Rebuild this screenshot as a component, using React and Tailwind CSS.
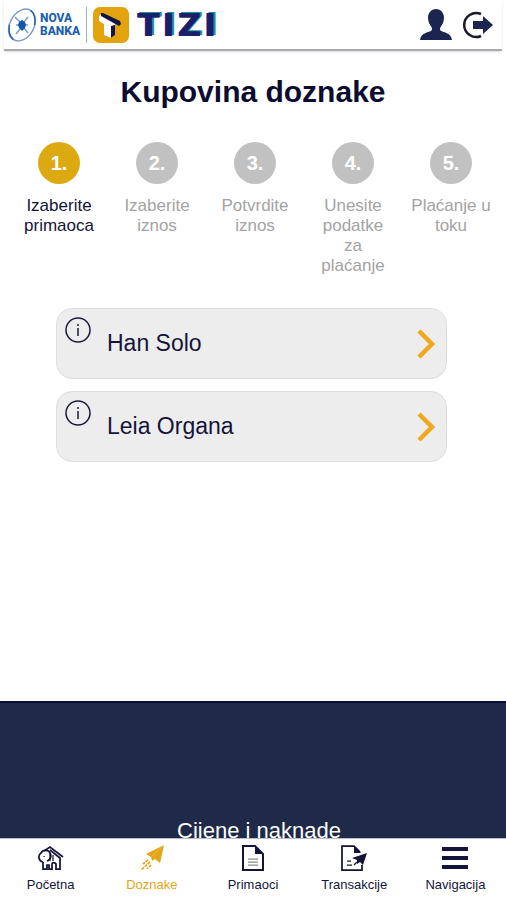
import clsx from 'clsx'

const steps = [
  { title: 'Izaberite primaoca', active: true },
  { title: 'Izaberite iznos' },
  { title: 'Potvrdite iznos' },
  { title: 'Unesite podatke za plaćanje' },
  { title: 'Plaćanje u toku' },
]

const recipients = ['Han Solo', 'Leia Organa']

function NovaBankaMark() {
  return (
    <svg viewBox="0 0 32 36" className="w-8 h-9" fill="none">
      <g transform="rotate(30 16 18)">
        <ellipse cx="16" cy="18" rx="12" ry="17" stroke="#7f9dca" strokeWidth="1.5" />
        <path d="M5 24c2 6 6 10 11 11M27 12c-2-6-6-10-11-11" stroke="#2d63ad" strokeWidth="1.5" />
      </g>
      <path d="M9 10l5 5M22 10l-4 5M10 27l4-5M22 26l-4-5M10 18h3M22 18h-3" stroke="#7f9dca" strokeWidth="1.5" />
      <path d="M16 13l3 2 1 3-1 3-3 3-3-3-1-3 1-3z" fill="#1459a8" />
    </svg>
  )
}

function TiziMark() {
  return (
    <svg viewBox="0 0 36 36" className="size-9">
      <rect width="36" height="36" rx="7" fill="#e3a30c" />
      <path d="M6 9l3-2 18 9v2l-5-1v11l-4 3-7-3V17l-5-3z" fill="#fff" />
      <path d="M8 6h2l17 8 1 3-2 2L8 9z" fill="#14134a" />
      <path d="M18 19l4-1v10l-4 3z" fill="#14134a" />
    </svg>
  )
}

function UserIcon() {
  return (
    <svg viewBox="0 0 32 32" className="size-8" fill="#1b2550">
      <path d="M16 0c5 0 8 4 8 9 0 4-2 7-4 10v2c3 3 11 2 12 10H0c1-8 9-7 12-10v-2c-2-3-4-6-4-10 0-5 3-9 8-9z" />
    </svg>
  )
}

function LogoutIcon() {
  return (
    <svg viewBox="0 0 32 28" className="w-8 h-7">
      <path d="M19 3A12 12 0 1 0 19 25" fill="none" stroke="#1a1a2e" strokeWidth="2.5" />
      <path d="M11 10h10V5l10 9-10 9v-5H11z" fill="#1b2550" />
    </svg>
  )
}

function HomeIcon() {
  return (
    <svg viewBox="0 0 26 26" className="size-[26px]" fill="none" stroke="currentColor" strokeWidth="1.75">
      <path d="M6 6l6-4 13 10" />
      <path d="M12 5l10 8v11h-4v-5c-1-2-4-2-4 0v5h-3v-4H9v4H5v-7" />
      <path d="M5 17c-5-1-5-7-2-9 2-4 8-3 9 0 2 4 0 7-3 8" />
      <path d="M6 11v1M12 8v8M15 10v6" strokeWidth="1.25" />
    </svg>
  )
}

function SendIcon() {
  return (
    <svg viewBox="0 0 26 26" className="size-[26px]" fill="currentColor">
      <path d="M25 0L7 9l5 3z" />
      <path d="M25 0L12 12l1 4 3-2 5 4z" />
      <path d="M9 15l-5 4M11 17l-9 8M12 20l-4 4" stroke="currentColor" strokeWidth="1.75" strokeDasharray="3 1" />
    </svg>
  )
}

function DocumentIcon() {
  return (
    <svg viewBox="0 0 26 26" className="size-[26px]" fill="none" stroke="currentColor">
      <path d="M3 1h12l8 8v16H3z" strokeWidth="2" />
      <path d="M15 1l8 8h-8z" fill="currentColor" stroke="none" />
      <path d="M8 14h10M8 17h10M8 20h10" stroke="#8b8b99" strokeWidth="1.25" />
    </svg>
  )
}

function TransferIcon() {
  return (
    <svg viewBox="0 0 26 26" className="size-[26px]" fill="none" stroke="currentColor">
      <path d="M21 20v5H1V1h12l6 6" strokeWidth="1.75" />
      <path d="M13 1l7 7h-7z" fill="currentColor" stroke="none" />
      <path d="M26 8L11 13l5 2v4l3-2 3 3z" fill="currentColor" stroke="none" />
      <path d="M6 16h4M6 20h5M13 20l3-3" strokeWidth="1.25" />
    </svg>
  )
}

function MenuIcon() {
  return (
    <svg viewBox="0 0 26 26" className="size-[26px]" fill="currentColor">
      <path d="M0 2h26v4H0zM0 11h26v4H0zM0 20h26v4H0z" />
    </svg>
  )
}

const tabs = [
  { label: 'Početna', icon: HomeIcon },
  { label: 'Doznake', icon: SendIcon, active: true },
  { label: 'Primaoci', icon: DocumentIcon },
  { label: 'Transakcije', icon: TransferIcon },
  { label: 'Navigacija', icon: MenuIcon },
]

function Step({ number, title, active }) {
  return (
    <li className="flex flex-col items-center px-2">
      <span
        className={clsx(
          'flex size-[42px] items-center justify-center rounded-full text-xl font-bold text-white',
          active ? 'bg-[#dcaa10]' : 'bg-[#c1c1c1]'
        )}
      >
        {number}.
      </span>
      <span
        className={clsx(
          'mt-3 text-center text-[17px] leading-5',
          active ? 'text-[#14143a]' : 'text-[#a3a3a3]'
        )}
      >
        {title}
      </span>
    </li>
  )
}

function RecipientCard({ name }) {
  return (
    <button className="flex h-[71px] w-full items-center rounded-2xl border border-[#dcdee2] bg-[#ededed] px-2 text-left">
      <svg viewBox="0 0 26 26" className="mt-2 size-[26px] self-start" fill="none" stroke="#1a1a3c">
        <circle cx="13" cy="13" r="12" strokeWidth="1.5" />
        <path d="M13 11v8M13 7v2" strokeWidth="1.5" />
      </svg>
      <span className="ml-4 flex-1 text-[23px] text-[#14143a]">{name}</span>
      <svg viewBox="0 0 24 32" className="h-8 w-6" fill="none" stroke="#f0a81c" strokeWidth="4.5">
        <path d="M5 3l13 13L5 29" />
      </svg>
    </button>
  )
}

export default function App() {
  return (
    <div className="flex h-screen flex-col overflow-hidden bg-white font-['Liberation_Sans',sans-serif]">
      {/* Top bar */}
      <header className="mx-1 flex h-[51px] shrink-0 items-center justify-between border-b-2 border-[#a9a9ad] pl-0.5 pr-2 shadow-sm">
        <div className="flex items-center">
          <NovaBankaMark />
          <span className="ml-0.5 w-10 font-['Roboto',sans-serif] text-xs font-extrabold leading-[13px] text-[#1b5faa]">
            NOVA BANKA
          </span>
          <span className="mx-1.5 h-9 w-px bg-[#9fb0cc]" />
          <TiziMark />
          <span className="ml-2 font-['DejaVu_Sans',sans-serif] text-[32px] font-bold leading-9 tracking-widest text-[#1a1f6b] [text-shadow:1px_0_0_#1a1f6b,2px_-1px_0_#1f8fa0,3px_-1px_0_#1f8fa0]">
            TIZI
          </span>
        </div>
        <div className="flex items-center gap-2.5">
          <button aria-label="Profil">
            <UserIcon />
          </button>
          <button aria-label="Odjava">
            <LogoutIcon />
          </button>
        </div>
      </header>

      <div className="min-h-0 flex-1 overflow-y-auto [scrollbar-width:none]">
        <main className="min-h-[650px] pt-[23px]">
          <h1 className="text-center text-3xl font-bold text-[#0c0c30]">Kupovina doznake</h1>

          <ol className="mt-8 grid grid-cols-5 pl-2.5 pr-1.5">
            {steps.map((step, i) => (
              <Step key={step.title} number={i + 1} {...step} />
            ))}
          </ol>

          <div className="ml-14 mr-[59px] mt-8 flex flex-col gap-3">
            {recipients.map((name) => (
              <RecipientCard key={name} name={name} />
            ))}
          </div>
        </main>

        {/* Footer links */}
        <footer className="border-t-2 border-[#0e1033] bg-[#1f2a48] pb-12 pl-3 pt-[114px] text-center">
          <a href="#" className="text-[22px] leading-7 text-white">
            Cijene i naknade
          </a>
        </footer>
      </div>

      {/* Bottom tabs */}
      <nav className="grid shrink-0 grid-cols-5 border-t border-[#b8bcc8] bg-white pb-[5px] pt-1.5">
        {tabs.map(({ label, icon: Icon, active }) => (
          <a
            key={label}
            href="#"
            className={clsx(
              'flex flex-col items-center gap-1 text-[13px] leading-5',
              active ? 'text-[#e3a417]' : 'text-[#14143a]'
            )}
          >
            <Icon />
            {label}
          </a>
        ))}
      </nav>
    </div>
  )
}
